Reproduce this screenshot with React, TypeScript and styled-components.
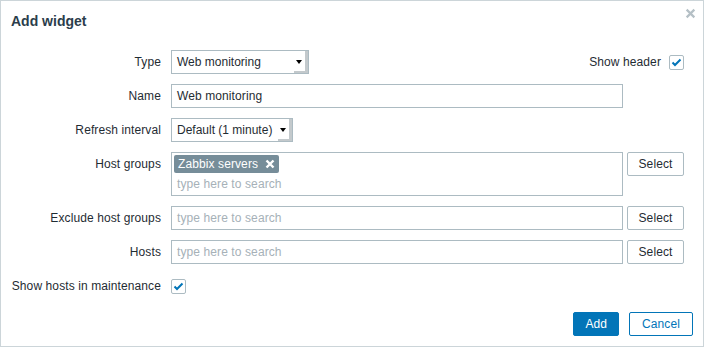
import styled, { createGlobalStyle } from "styled-components";

const GlobalStyle = createGlobalStyle`
  html, body {
    margin: 0;
    padding: 0;
    background: #ffffff;
  }
  body {
    font-family: "Liberation Sans", Arial, sans-serif;
    font-size: 12px;
    letter-spacing: 0.1px;
    color: #1f2c33;
  }
`;

const Dialog = styled.div`
  position: relative;
  box-sizing: border-box;
  width: 704px;
  height: 347px;
  border: 1px solid #ccd5d9;
  background: #ffffff;
  display: flex;
  flex-direction: column;
`;

const Header = styled.div`
  height: 39px;
  padding: 0 10px;
  display: flex;
  align-items: center;
`;

const Title = styled.h4`
  margin: 0;
  font-size: 14px;
  font-weight: bold;
  letter-spacing: 0;
  color: #2b3d4b;
`;

const Close = styled.button`
  position: absolute;
  top: 4px;
  right: 5px;
  width: 16px;
  height: 16px;
  padding: 0;
  border: 0;
  background: none;
  display: flex;
  align-items: center;
  justify-content: center;
`;

const Form = styled.div`
  display: grid;
  grid-template-columns: 150px 513px;
  column-gap: 10px;
  row-gap: 10px;
  padding: 10px 0 0 10px;
`;

const Label = styled.div`
  height: 24px;
  line-height: 24px;
  text-align: right;
  white-space: nowrap;
`;

const Field = styled.div`
  display: flex;
  align-items: flex-start;
  gap: 4px;
`;

const SplitField = styled(Field)`
  justify-content: space-between;
  align-items: center;
`;

const Select = styled.div<{ $width: number }>`
  position: relative;
  box-sizing: border-box;
  width: ${(p) => p.$width}px;
  height: 24px;
  line-height: 22px;
  padding: 0 5px;
  border: 1px solid #acbbc2;
  background: #ffffff;
  letter-spacing: 0;

  &::before {
    content: "";
    position: absolute;
    right: 0;
    top: 0;
    bottom: 0;
    width: 14px;
    box-shadow: inset -3px -2px 0 #c3c9cc;
  }
  &::after {
    content: "";
    position: absolute;
    right: 6px;
    top: 9px;
    border-left: 3px solid transparent;
    border-right: 3px solid transparent;
    border-top: 4px solid #000000;
  }
`;

const Input = styled.div`
  box-sizing: border-box;
  width: 452px;
  height: 24px;
  line-height: 22px;
  padding: 0 5px;
  border: 1px solid #acbbc2;
  background: #ffffff;
`;

const Placeholder = styled.span`
  color: #a6b1b8;
`;

const MultiSelect = styled.div`
  box-sizing: border-box;
  width: 452px;
  height: 44px;
  padding: 2px 5px 0 2px;
  border: 1px solid #acbbc2;
  background: #ffffff;
`;

const Tag = styled.span`
  display: inline-flex;
  align-items: center;
  gap: 7px;
  height: 18px;
  padding: 0 4px;
  border-radius: 2px;
  background: #768d99;
  color: #ffffff;
`;

const SearchLine = styled.div`
  height: 20px;
  line-height: 20px;
  padding-left: 3px;
  margin-top: 1px;
`;

const SelectButton = styled.button`
  box-sizing: border-box;
  width: 57px;
  height: 24px;
  padding: 0;
  border: 1px solid #acbbc2;
  border-radius: 2px;
  background: #ffffff;
  color: #1f2c33;
  font-family: inherit;
  font-size: 12px;
  letter-spacing: inherit;
`;

const CheckRow = styled.div`
  display: flex;
  align-items: center;
  gap: 8px;
`;

const Checkbox = styled.span`
  box-sizing: border-box;
  width: 15px;
  height: 15px;
  border: 1px solid #acbbc2;
  border-radius: 2px;
  display: flex;
  align-items: center;
  justify-content: center;
`;

const Footer = styled.div`
  margin-top: auto;
  padding: 0 10px 10px 0;
  display: flex;
  justify-content: flex-end;
  gap: 10px;
`;

const FooterButton = styled.button<{ $primary?: boolean }>`
  box-sizing: border-box;
  height: 24px;
  padding: 0 ${(p) => (p.$primary ? 11 : 12)}px;
  border: 1px solid #0275b8;
  border-radius: 2px;
  background: ${(p) => (p.$primary ? "#0275b8" : "#ffffff")};
  color: ${(p) => (p.$primary ? "#ffffff" : "#0275b8")};
  font-family: inherit;
  font-size: 12px;
  letter-spacing: inherit;
`;

const Check = () => (
  <Checkbox>
    <svg width="11" height="9" viewBox="0 0 11 9">
      <path d="M1.5 4.5 L4 7 L9.5 1.5" fill="none" stroke="#0275b8" strokeWidth="2" />
    </svg>
  </Checkbox>
);

const Cross = ({ color, size, weight }: { color: string; size: number; weight: number }) => (
  <svg width={size} height={size} viewBox="0 0 10 10">
    <path d="M1.5 1.5 L8.5 8.5 M8.5 1.5 L1.5 8.5" stroke={color} strokeWidth={weight} />
  </svg>
);

export default function App() {
  return (
    <>
      <GlobalStyle />
      <Dialog>
        <Header>
          <Title>Add widget</Title>
        </Header>
        <Close>
          <Cross color="#b5c0c6" size={11} weight={2} />
        </Close>
        <Form>
          <Label>Type</Label>
          <SplitField>
            <Select $width={138}>Web monitoring</Select>
            <CheckRow>
              Show header
              <Check />
            </CheckRow>
          </SplitField>

          <Label>Name</Label>
          <Field>
            <Input>Web monitoring</Input>
          </Field>

          <Label>Refresh interval</Label>
          <Field>
            <Select $width={122}>Default (1 minute)</Select>
          </Field>

          <Label>Host groups</Label>
          <Field>
            <MultiSelect>
              <Tag>
                Zabbix servers
                <Cross color="#ffffff" size={10} weight={2.4} />
              </Tag>
              <SearchLine>
                <Placeholder>type here to search</Placeholder>
              </SearchLine>
            </MultiSelect>
            <SelectButton>Select</SelectButton>
          </Field>

          <Label>Exclude host groups</Label>
          <Field>
            <Input>
              <Placeholder>type here to search</Placeholder>
            </Input>
            <SelectButton>Select</SelectButton>
          </Field>

          <Label>Hosts</Label>
          <Field>
            <Input>
              <Placeholder>type here to search</Placeholder>
            </Input>
            <SelectButton>Select</SelectButton>
          </Field>

          <Label>Show hosts in maintenance</Label>
          <CheckRow>
            <Check />
          </CheckRow>
        </Form>
        <Footer>
          <FooterButton $primary>Add</FooterButton>
          <FooterButton>Cancel</FooterButton>
        </Footer>
      </Dialog>
    </>
  );
}
